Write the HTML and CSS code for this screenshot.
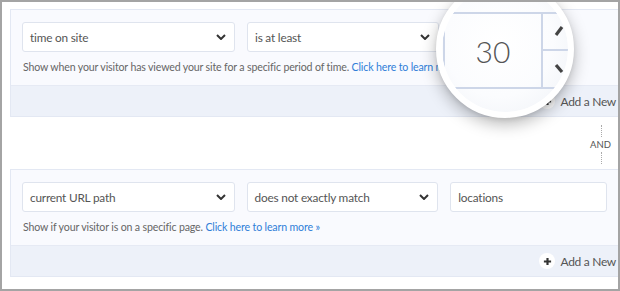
FILE: index.html
```html
<!DOCTYPE html>
<html>
<head>
<meta charset="utf-8">
<link rel="stylesheet" href="styles.css">
</head>
<body>
<div class="frame">
  <section class="card">
    <div class="card-body">
      <div class="fields">
        <div class="field select w1"><span>time on site</span><svg class="chev" viewBox="0 0 10 6"><path d="M1 1l4 4 4-4"/></svg></div>
        <div class="field select w2"><span>is at least</span><svg class="chev" viewBox="0 0 10 6"><path d="M1 1l4 4 4-4"/></svg></div>
      </div>
      <p class="desc">Show when your visitor has viewed your site for a specific period of time. <a href="#">Click here to learn more »</a></p>
    </div>
    <div class="card-foot">
      <span class="add"><span class="plus"><svg viewBox="0 0 10 10"><path d="M5 1v8M1 5h8"/></svg></span>Add a New</span>
    </div>
  </section>

  <div class="and">
    <span class="dots"></span>
    <span class="and-label">AND</span>
    <span class="dots"></span>
  </div>

  <section class="card">
    <div class="card-body">
      <div class="fields">
        <div class="field select w1"><span>current URL path</span><svg class="chev" viewBox="0 0 10 6"><path d="M1 1l4 4 4-4"/></svg></div>
        <div class="field select w2"><span>does not exactly match</span><svg class="chev" viewBox="0 0 10 6"><path d="M1 1l4 4 4-4"/></svg></div>
        <div class="field w3"><span>locations</span></div>
      </div>
      <p class="desc">Show if your visitor is on a specific page. <a href="#">Click here to learn more »</a></p>
    </div>
    <div class="card-foot">
      <span class="add"><span class="plus"><svg viewBox="0 0 10 10"><path d="M5 1v8M1 5h8"/></svg></span>Add a New</span>
    </div>
  </section>

  <div class="magnifier">
    <div class="lens">
      <div class="zoom-input">
        <div class="zoom-value">30</div>
        <div class="zoom-spin">
          <div class="spin-half"><svg viewBox="0 0 20 20"><path d="M2 11l6-8"/></svg></div>
          <div class="spin-half"><svg viewBox="0 0 20 20"><path d="M2 3l6 7"/></svg></div>
        </div>
      </div>
    </div>
  </div>
</div>
</body>
</html>
```

FILE: styles.css
```css
* { box-sizing: border-box; }
html, body { margin: 0; padding: 0; background: #fff; }
body { font-family: Lato, "Open Sans", sans-serif; color: #555; }

.frame {
  position: relative;
  width: 620px;
  height: 291px;
  border: 2px solid #a4a4a4;
  padding: 7px 0 0 8px;
  overflow: hidden;
  background: #fff;
}

.card {
  width: 609px;
  border: 1px solid #e3e8f3;
  background: #f9fafe;
}

.card-body {
  padding: 12px 11px 10px 11px;
  height: 75px;
}

.fields {
  display: flex;
  gap: 12px;
}

.field {
  height: 30px;
  background: #fff;
  border: 1px solid #dfe4ee;
  border-radius: 3px;
  display: flex;
  align-items: center;
  justify-content: space-between;
  padding: 0 8px 0 7px;
  font-size: 11.8px;
  letter-spacing: -0.2px;
  color: #555;
}
.w1 { width: 213px; }
.w2 { width: 192px; }
.w3 { width: 157px; }

.chev {
  width: 10px;
  height: 6px;
  fill: none;
  stroke: #333;
  stroke-width: 2;
}

.desc {
  margin: 7px 0 0 1px;
  font-size: 10.6px;
  letter-spacing: -0.15px;
  line-height: 16px;
  color: #666;
  white-space: nowrap;
}
.desc a { color: #2f7ed8; text-decoration: none; }

.card-foot {
  height: 31px;
  background: #edf1f9;
  border-top: 1px solid #e6eaf4;
  display: flex;
  align-items: center;
  justify-content: flex-end;
  padding-right: 2px;
}

.add {
  display: flex;
  align-items: center;
  gap: 5px;
  font-size: 12px;
  letter-spacing: -0.3px;
  color: #555;
}
.plus {
  width: 16px;
  height: 16px;
  border-radius: 50%;
  background: #fff;
  display: flex;
  align-items: center;
  justify-content: center;
}
.plus svg {
  width: 9px;
  height: 9px;
  stroke: #333;
  stroke-width: 2.4;
  fill: none;
}

.and {
  height: 52px;
  display: flex;
  flex-direction: column;
  align-items: flex-end;
  padding: 8px 7px 0 0;
}
.dots {
  width: 1px;
  height: 12px;
  border-left: 1px dotted #aaa;
  margin-right: 9px;
}
.and-label {
  font-size: 9.5px;
  line-height: 11px;
  margin: 2px 0 2px;
  color: #555;
}

.magnifier {
  position: absolute;
  left: 434px;
  top: -22px;
  width: 138px;
  height: 138px;
  border-radius: 50%;
  border: 6px solid #fff;
  box-shadow: 0 6px 16px rgba(0, 0, 0, 0.28), 0 2px 4px rgba(0,0,0,0.08);
  overflow: hidden;
  background: #fff;
}
.lens {
  width: 126px;
  height: 126px;
  border-radius: 50%;
  overflow: hidden;
  background: radial-gradient(circle at 45% 45%, #ffffff 0%, #fbfcfe 55%, #eef1f6 100%);
  padding: 26px 0 0 1px;
}
.zoom-input {
  display: flex;
  height: 77px;
  width: 160px;
  border: 2px solid #cdd6e8;
  border-right: none;
}
.zoom-value {
  width: 96px;
  display: flex;
  align-items: center;
  justify-content: center;
  font-size: 30px;
  font-weight: 300;
  color: #555;
  padding-top: 1px;
}
.zoom-spin {
  flex: 1;
  display: flex;
  flex-direction: column;
  border-left: 2px solid #cdd6e8;
}
.spin-half {
  flex: 1;
  padding: 10px 0 0 11px;
}
.spin-half + .spin-half {
  border-top: 2px solid #cdd6e8;
  padding-top: 11px;
}
.spin-half svg {
  width: 20px;
  height: 20px;
  fill: none;
  stroke: #444;
  stroke-width: 3.2;
}
```
